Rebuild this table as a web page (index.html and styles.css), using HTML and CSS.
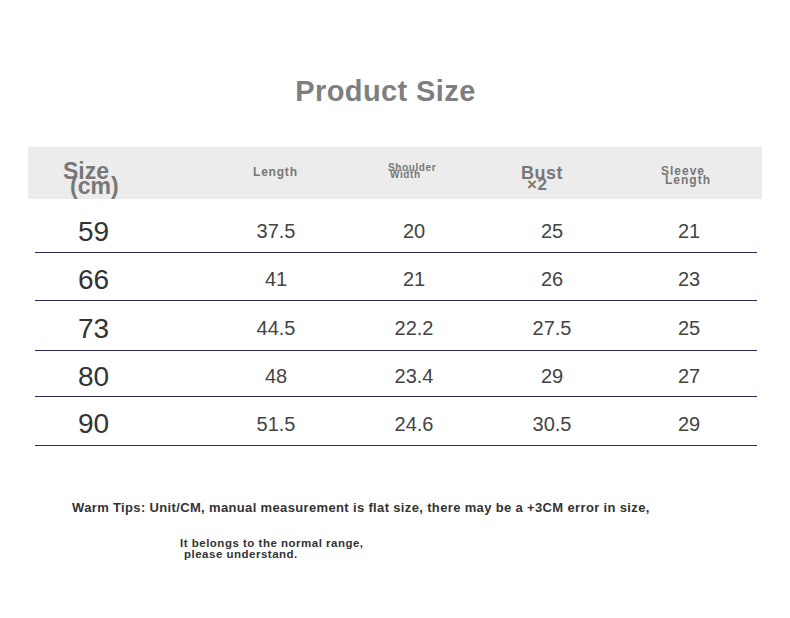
FILE: index.html
```html
<!DOCTYPE html>
<html lang="en">
<head>
<meta charset="utf-8">
<title>Product Size</title>
<link rel="stylesheet" href="styles.css">
</head>
<body>
<main class="page">
  <h1 class="title">Product Size</h1>

  <section class="chart">
    <div class="head">
      <div class="hc hc-size">Size<br><span class="indent-size">(cm)</span></div>
      <div class="hc hc-length">Length</div>
      <div class="hc hc-shoulder">Shoulder<br><span class="indent-width">Width</span></div>
      <div class="hc hc-bust">Bust<br><span class="indent-x2">×2</span></div>
      <div class="hc hc-sleeve">Sleeve<br><span class="indent-len">Length</span></div>
    </div>

    <div class="row"><div class="c size">59</div><div class="c">37.5</div><div class="c">20</div><div class="c">25</div><div class="c">21</div></div>
    <div class="row"><div class="c size">66</div><div class="c">41</div><div class="c">21</div><div class="c">26</div><div class="c">23</div></div>
    <div class="row"><div class="c size">73</div><div class="c">44.5</div><div class="c">22.2</div><div class="c">27.5</div><div class="c">25</div></div>
    <div class="row"><div class="c size">80</div><div class="c">48</div><div class="c">23.4</div><div class="c">29</div><div class="c">27</div></div>
    <div class="row"><div class="c size">90</div><div class="c">51.5</div><div class="c">24.6</div><div class="c">30.5</div><div class="c">29</div></div>
  </section>

  <section class="tips">
    <p class="tip-main">Warm Tips: Unit/CM, manual measurement is flat size, there may be a +3CM error in size,</p>
    <p class="tip-sub">It belongs to the normal range,<br><span class="indent-pl">please understand.</span></p>
  </section>
</main>
</body>
</html>
```

FILE: styles.css
```css
* { box-sizing: border-box; }

html, body {
  margin: 0;
  padding: 0;
  background: #ffffff;
}

body {
  font-family: "Liberation Sans", Arial, sans-serif;
  width: 790px;
  height: 618px;
  overflow: hidden;
}

.page {
  padding-top: 75px;
}

.title {
  margin: 0;
  padding-right: 19px;
  font-size: 29px;
  letter-spacing: 0.4px;
  line-height: 32px;
  font-weight: 700;
  color: #7f7f7f;
  text-align: center;
}

.chart {
  margin: 40px 0 0 35px;
  width: 722px;
}

.head,
.row {
  display: grid;
  grid-template-columns: 172px 138px 138px 138px 136px;
}

.head {
  margin: 0 -5px 0 -7px;
  padding: 0 5px 0 7px;
  height: 52px;
  background: #ececec;
  color: #777777;
  font-weight: 700;
  align-items: start;
}

.hc { white-space: nowrap; }

.hc-size {
  font-size: 23px;
  line-height: 15px;
  padding: 17px 0 0 28px;
}
.indent-size { padding-left: 7px; }

.hc-length {
  font-size: 12px;
  letter-spacing: 0.8px;
  line-height: 12px;
  padding: 19px 0 0 46px;
}

.hc-shoulder {
  font-size: 10px;
  letter-spacing: 0.6px;
  line-height: 7px;
  padding: 17px 0 0 43px;
}
.indent-width { padding-left: 2px; }

.hc-bust {
  font-size: 18px;
  letter-spacing: 0.5px;
  line-height: 11px;
  padding: 21px 0 0 38px;
}
.indent-x2 { padding-left: 6px; font-size: 17px; }

.hc-sleeve {
  font-size: 12px;
  letter-spacing: 1px;
  line-height: 9px;
  padding: 20px 0 0 40px;
}
.indent-len { padding-left: 4px; }

.row {
  height: 48px;
  padding-top: 6px;
  border-bottom: 1px solid #2b2b5e;
  align-items: center;
  color: #444444;
}
.row:nth-of-type(2) { height: 54px; padding-top: 12px; }
.row:nth-of-type(4) { height: 50px; }
.row:nth-of-type(5) { height: 46px; }
.row:nth-of-type(6) { height: 49px; }

.c {
  font-size: 20px;
  text-align: center;
}

.c.size {
  font-size: 28px;
  text-align: left;
  padding-left: 43px;
  color: #333333;
}

.tips {
  margin-top: 54px;
  color: #333333;
  font-weight: 700;
}

.tip-main {
  margin: 0 0 0 72px;
  font-size: 13px;
  letter-spacing: 0.35px;
  line-height: 16px;
  white-space: nowrap;
}

.tip-sub {
  margin: 22px 0 0 180px;
  font-size: 11.5px;
  letter-spacing: 0.5px;
  line-height: 11px;
  white-space: nowrap;
}
.indent-pl { padding-left: 4px; }
```
